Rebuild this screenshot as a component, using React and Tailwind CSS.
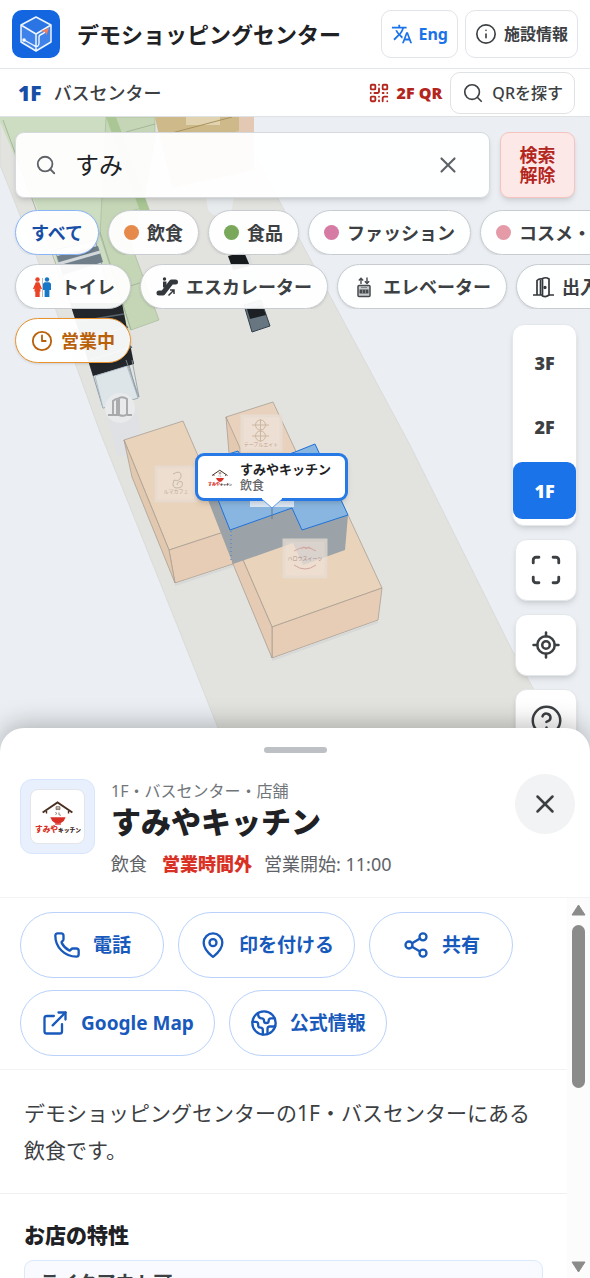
import {
  Info, QrCode, Search, X, Clock3, Scan, LocateFixed, CircleHelp,
  Phone, MapPin, Share2, ExternalLink, Earth,
} from "lucide-react";
import { MdTranslate } from "react-icons/md";

function AppLogo() {
  return (
    <svg viewBox="0 0 48 48" className="size-12 shrink-0" aria-hidden="true">
      <rect width="48" height="48" rx="10" fill="#1466e0" />
      <path d="M24 7 L39 15 V32 L24 41 L9 32 V15Z" fill="#3f83ea" />
      <path d="M24 7 L39 15 L24 24 L9 15Z" fill="#2b74e4" />
      <path d="M24 7 L39 15 V32 L24 41 L9 32 V15Z M9 15 L24 24 L39 15 M24 24 V41" fill="none" stroke="#eef5ff" strokeWidth="1.5" strokeLinejoin="round" />
      <path d="M12 30 L22 35.500 Q27 38 27 33 V27 Q27 25 30 24 Q33 23 33 20.500" fill="none" stroke="#eef5ff" strokeWidth="1.400" />
      <path d="M29 21 L37 18 L34.500 25 L33 22Z" fill="#ef7d5a" />
      <circle cx="12" cy="30" r="1.800" fill="#fff" />
    </svg>
  );
}

function ShopLogo({ className }) {
  return (
    <svg viewBox="0 0 48 34" className={className} aria-hidden="true">
      <path d="M8 13 L23.500 2.500 L39 13" fill="none" stroke="#4a2f20" strokeWidth="2" />
      <path d="M12 11.500V14 M35 11.500V14" stroke="#4a2f20" strokeWidth="1.500" />
      <path d="M22 7h4v3h-4z M22 8.500h4 M21.500 12.500q2 2 0 3 M25 13q-1 3 2 3" fill="none" stroke="#6b5140" strokeWidth=".8" />
      <path d="M16 18 H32 L30 22 Q28 24.500 24 24.500 Q20 24.500 18 22Z" fill="#d93025" />
      <path d="M21 25h6" stroke="#d93025" strokeWidth="1.500" />
      <text x="0" y="33" fontSize="8" fontWeight="900" fontFamily="Noto Sans CJK JP, sans-serif" fill="#d93025">すみや</text>
      <text x="24" y="33" fontSize="6" fontWeight="900" fontFamily="Noto Sans CJK JP, sans-serif" fill="#3b2418">キッチン</text>
    </svg>
  );
}

function RestroomIcon() {
  return (
    <svg viewBox="0 0 22 22" className="size-[22px]" aria-hidden="true">
      <circle cx="6.500" cy="3.500" r="2.200" fill="#ea4325" />
      <path d="M4.800 6.200h3.400l2.800 6.600-1.400.6-1-2 1.100 4H8.700V21H4.300v-5.600H3.200l1.200-4-1 2-1.400-.6z" fill="#ea4325" />
      <path d="M11.500 2v19" stroke="#b5babf" strokeWidth="1" />
      <circle cx="16" cy="3.500" r="2.200" fill="#1676c8" />
      <path d="M13.500 6.200h5l1.500 1.500V14h-1.600v7h-4.800v-7H12V7.700z" fill="#1676c8" />
    </svg>
  );
}

function EscalatorIcon() {
  return (
    <svg viewBox="0 0 22 22" className="size-[22px]" aria-hidden="true">
      <path d="M3 17h4L15.500 6H19.500" fill="none" stroke="#34383c" strokeWidth="5" strokeLinecap="round" strokeLinejoin="round" />
      <circle cx="8.500" cy="3" r="1.700" fill="#34383c" />
      <path d="M7 5.500h3.500v6H7z" fill="#34383c" />
      <path d="M12.500 19.500l5-5 M14 14h4v4" fill="none" stroke="#34383c" strokeWidth="1.500" />
    </svg>
  );
}

function ElevatorIcon() {
  return (
    <svg viewBox="0 0 22 22" className="size-[22px]" aria-hidden="true">
      <path d="M8 8V2.500 M5.800 4.500L8 2.300l2.200 2.200 M14 1.500V7.200 M11.800 5.200L14 7.400l2.200-2.200" fill="none" stroke="#46494d" strokeWidth="1.400" />
      <rect x="5" y="9.500" width="12" height="11" rx="1" fill="#c9ccce" stroke="#46494d" strokeWidth="1.500" />
      <path d="M6.500 13.500h9v4h-9z" fill="#46494d" />
      <path d="M8 11.500h6 M9.500 13.500v4 M12.500 13.500v4" stroke="#83878a" strokeWidth="1" />
    </svg>
  );
}

function DoorIcon() {
  return (
    <svg viewBox="0 0 22 22" className="size-[22px]" fill="none" stroke="#34383c" strokeWidth="1.700" aria-hidden="true">
      <path d="M1 19h4V4.500q2-2 5-1.500 M8.500 4V19 M4.500 19H10 M17 19H22" />
      <path d="M10.500 2.500 Q14 .8 17 3 V19 Q14 21.500 10.500 20Z" />
      <circle cx="13" cy="11.500" r=".8" fill="#34383c" />
    </svg>
  );
}

function FloorMap() {
  return (
    <svg viewBox="0 117 590 1161" preserveAspectRatio="xMidYMin slice" className="absolute inset-0 size-full" role="img" aria-label="1F フロアマップ">
      <rect y="117" width="590" height="1161" fill="#ebeff3" />
      <path d="M0 117H235L300 240L410 445L512 650L555 728L600 820H255L218 728L195 670L100 432L37 258L0 165Z" fill="#e2e3de" stroke="#d5d6d2" strokeWidth=".7" />
      <path d="M0 117H155V131L142 208L131 245L159 320L131 330L85 340L36 205L0 122Z" fill="#cdddc1" />
      <path d="M106 117H155V140L142 208L120 214L159 320L131 330L100 235Z" fill="#c4d6b6" stroke="#a3b599" strokeWidth=".6" />
      <path d="M106 117h10l34 94l-10 0z" fill="#a9c694" />
      <path d="M3 120L38 215L80 330 M126 132L155 124 M100 232L131 330 M130 286L146 281" fill="none" stroke="#9daf93" strokeWidth=".8" />
      <path d="M155 117H254V131L254 170L172 188Z" fill="#e3c8b3" />
      <path d="M155 117H239V131L200 140L160 140Z" fill="#ceb98b" />
      <path d="M186 117h34v8h-34z" fill="#e1d3b0" />
      <path d="M168 134L232 117" stroke="#a8925e" strokeWidth="1" />
      <path d="M206 197h28l-3 16q-14 8-23-3z" fill="#e8ebee" />

      <path d="M55 250L95 240L138 398L103 408Z" fill="#dde3e7" stroke="#7d8a94" strokeWidth=".8" />
      <path d="M57 256L98 246L103 262L63 275Z" fill="#6f7e89" />
      <path d="M58 264L100 252" stroke="#d3d8db" strokeWidth="3" />
      <path d="M70 303L122 303L134 364L93 376Z" fill="#23272b" />
      <path d="M75 322L124 314 M82 339L128 327 M90 360L132 347" stroke="#59646d" strokeWidth="1.500" />
      <path d="M95 376L127 366L138 398L103 408Z" fill="#dde5e9" stroke="#a1afba" strokeWidth=".7" />
      <path d="M126 360L139 397M132 360L139 397" stroke="#8b9aa5" strokeWidth=".8" />

      <path d="M222 222L240 220L270 326L253 332Z" fill="#d9dcdd" />
      <path d="M228 256L244 252L250 266L233 270Z" fill="#171a1d" />
      <path d="M244 305L261 300L270 326L252 332Z" fill="#677681" stroke="#35424c" strokeWidth="1" />
      <path d="M247 309L262 305L266 315L250 319Z" fill="#1c2024" />

      <path d="M106 410Q120 380 136 407L143 445Q136 461 117 455Z" fill="#dfe1e4" />
      <circle cx="120" cy="408" r="15" fill="#e9eaeb" />
      <g fill="none" stroke="#a7a9ab" strokeWidth="1.900">
        <path d="M108 415h5V401q3-3 6-2 M117 400v15 M112 415h7 M127 415h5 M119 398q4-2 8 1v15q-2 3-8 1z" />
      </g>

      <g stroke="#a99f94" strokeWidth=".8" strokeLinejoin="round">
        <path d="M124 440L183 421L230 530L169 550Z" fill="#e9d3bb" />
        <path d="M169 550L230 530L233 564L175 583Z" fill="#e7cdb5" />
        <path d="M124 440L132 477L175 583L169 550Z" fill="#e2c8af" />
        <path d="M226 417L273 402L300 460L245 475Z" fill="#e8d2bd" />
        <path d="M226 417L240 448L240 475L229 453Z" fill="#e3c9b0" />
        <path d="M230 530L348 515L382 588L272 627Z" fill="#e9d3bb" />
        <path d="M272 627L382 588L378 620L272 658Z" fill="#e7cdb6" />
        <path d="M230 530L272 627L272 658L233 564Z" fill="#e5cbb3" />
      </g>
      <path d="M175 585L233 566 M272 660L378 622" stroke="#d7d8d8" strokeWidth="2" />
      <path d="M203 462L230 530L292 508L302 530L348 515L345 550L303 565L293 543L233 564L208 500Z" fill="#9ba3a8" />
      <path d="M203 462L238 451L248 468L295 452L315 444L348 515L302 530L292 508L230 530Z" fill="#89b6e0" stroke="#1f70d8" strokeWidth="1" />
      <path d="M231 531V562" stroke="#3d7ed2" strokeDasharray="1 3" />

      <g fill="#efe2d8" stroke="#e8ddd4" strokeWidth="3">
        <rect x="242" y="416" width="39" height="34" opacity=".85" />
        <rect x="156" y="467" width="40" height="34" opacity=".75" />
        <rect x="284" y="540" width="42" height="37" opacity=".75" />
      </g>
      <rect x="250" y="497" width="44" height="10" fill="#dce9f6" />
      <g fill="none" stroke="#cdb79f" strokeWidth="1">
        <circle cx="260.500" cy="425" r="5" /><circle cx="260.500" cy="436" r="5" />
        <path d="M252 425h17M252 436h17M260.500 419v23" />
        <path d="M173 474q9-5 8 3q-2 5-7 3q-3 8 3 8q7 0 5-6q-4-2-5 3" stroke="#c5b8a9" />
        <path d="M294 551q11-7 22 0M294 565q11 8 22 0 M301 549q3-4 5 0q3-4 5 0" stroke="#d3a7a0" />
      </g>
      <g fontFamily="Noto Sans CJK JP, sans-serif" fontSize="5" textAnchor="middle">
        <text x="261" y="446" fill="#c4a58e">テーブルエイト</text>
        <text x="176" y="493" fill="#bbab9d">ルマカフェ</text>
        <text x="305" y="560" fill="#ad918d">ハロウスイーツ</text>
      </g>
      <path d="M272 505V519" stroke="#65798c" strokeWidth="1" />
    </svg>
  );
}

const CHIP = "flex h-[45px] shrink-0 items-center gap-2 whitespace-nowrap rounded-full border bg-white/95 px-[15px] text-lg leading-6 font-bold shadow-sm";
const SQUARE = "flex size-[62px] items-center justify-center rounded-xl border border-[#e4e7ea] bg-white text-[#3c4043] shadow-md";
const ACTION = "flex h-[66px] min-w-[144px] items-center justify-center gap-3 rounded-full border border-[#b9d2fb] bg-white px-5 text-[19px] leading-7 font-bold text-[#185abc]";

const categories = [
  { name: "飲食", dot: "bg-[#e58a4b]" },
  { name: "食品", dot: "bg-[#79a85a]" },
  { name: "ファッション", dot: "bg-[#d57ba4]" },
  { name: "コスメ・美容", dot: "bg-[#e59aa8]" },
];

const facilities = [
  { name: "トイレ", Icon: RestroomIcon },
  { name: "エスカレーター", Icon: EscalatorIcon },
  { name: "エレベーター", Icon: ElevatorIcon },
  { name: "出入口", Icon: DoorIcon },
];

const actions = [
  { name: "電話", Icon: Phone },
  { name: "印を付ける", Icon: MapPin },
  { name: "共有", Icon: Share2 },
  { name: "Google Map", Icon: ExternalLink },
  { name: "公式情報", Icon: Earth },
];

function Header() {
  return (
    <header className="shrink-0 bg-white">
      <div className="flex h-[69px] items-center border-b border-[#e3e6ec] pl-3 pr-3">
        <AppLogo />
        <h1 className="ml-[17px] min-w-0 flex-1 truncate text-[22px] leading-8 font-bold text-[#202124]">デモショッピングセンター</h1>
        <div className="flex gap-[7px]">
          <button className="flex h-12 items-center gap-[6px] rounded-[10px] border border-[#e1e4e8] px-[9px] text-base font-bold text-[#1a73e8]">
            <MdTranslate className="size-[22px]" aria-hidden="true" />
            Eng
          </button>
          <button className="flex h-12 items-center gap-[7px] rounded-[10px] border border-[#e1e4e8] px-[9px] text-base font-bold text-[#3c4043]">
            <Info className="size-[22px]" strokeWidth={1.8} aria-hidden="true" />
            施設情報
          </button>
        </div>
      </div>
      <div className="flex h-12 items-center border-b border-[#dfe2e5] pl-[18px] pr-[15px]">
        <strong className="text-[21px] leading-7 font-black text-[#174ea6]">1F</strong>
        <span className="ml-3 text-lg leading-7 font-medium text-[#3c4043]">バスセンター</span>
        <button className="ml-auto flex items-center gap-[7px] text-base font-black text-[#b3261e]">
          <QrCode className="size-[22px]" strokeWidth={2} aria-hidden="true" />
          2F QR
        </button>
        <button className="ml-2 flex h-[42px] items-center gap-2 rounded-[10px] border border-[#dfe2e5] px-[11px] text-base font-medium text-[#3c4043]">
          <Search className="size-[22px]" strokeWidth={1.8} aria-hidden="true" />
          QRを探す
        </button>
      </div>
    </header>
  );
}

function SearchPanel() {
  return (
    <div className="relative flex flex-col pt-[15px]">
      <div className="flex gap-[10px] px-[15px]">
        <div className="flex h-[66px] min-w-0 flex-1 items-center rounded-[9px] border border-[#d5d9dd] bg-white/95 pl-[19px] pr-7 shadow-md">
          <Search className="size-[22px] shrink-0 text-[#5f6368]" strokeWidth={2} aria-hidden="true" />
          <input aria-label="店舗検索" defaultValue="すみ" className="ml-[18px] min-w-0 flex-1 bg-transparent text-2xl text-[#202124] outline-none" />
          <button aria-label="入力を消す" className="text-[#5f6368]"><X className="size-[26px]" strokeWidth={2} /></button>
        </div>
        <button className="h-[66px] w-[75px] rounded-[9px] border border-[#f6c4c0] bg-[#fce8e6] text-lg leading-5 font-bold text-[#b3261e] shadow-md">
          検索<br />解除
        </button>
      </div>
      <div className="mt-3 flex gap-[9px] overflow-hidden pl-[15px]">
        <button className={CHIP + " border-[#8ab4f8] bg-[#e8f0fe] text-[#174ea6]"}>すべて</button>
        {categories.map((c) => (
          <button key={c.name} className={CHIP + " border-[#c8ccd1] text-[#3c4043]"}>
            <span className={"size-[15px] rounded-full " + c.dot} />
            {c.name}
          </button>
        ))}
      </div>
      <div className="mt-[9px] flex gap-[9px] overflow-hidden pl-[15px]">
        {facilities.map(({ name, Icon }) => (
          <button key={name} className={CHIP + " border-[#c8ccd1] text-[#3c4043]"}>
            <Icon />
            {name}
          </button>
        ))}
      </div>
      <div className="mt-[9px] flex pl-[15px]">
        <button className={CHIP + " border-[#e8912d] text-[#b9610a]"}>
          <Clock3 className="size-[22px]" strokeWidth={2} aria-hidden="true" />
          営業中
        </button>
      </div>
    </div>
  );
}

function MapControls() {
  return (
    <div className="absolute right-[13px] top-[207px] flex flex-col items-end gap-[13px]">
      <div className="flex w-[65px] flex-col gap-[7px] rounded-xl border border-[#e4e7ea] bg-white pt-[9px] pb-[6px] text-lg font-black text-[#3c4043] shadow-md">
        <button className="h-[57px] rounded-[9px]">3F</button>
        <button className="h-[57px] rounded-[9px]">2F</button>
        <button aria-pressed="true" className="h-[57px] rounded-[9px] bg-[#1a73e8] text-white">1F</button>
      </div>
      <button aria-label="全体表示" className={SQUARE}><Scan className="size-[34px]" strokeWidth={2} /></button>
      <button aria-label="現在地" className={SQUARE}><LocateFixed className="size-[30px]" strokeWidth={2} /></button>
      <button aria-label="ヘルプ" className={SQUARE}><CircleHelp className="size-[33px]" strokeWidth={1.8} /></button>
    </div>
  );
}

function ShopPin() {
  return (
    <div className="absolute left-[195px] top-[336px]">
      <div className="relative flex h-12 w-[153px] items-center gap-2 rounded-[9px] border-[3px] border-[#2779e6] bg-white pl-[10px] shadow-md">
        <ShopLogo className="w-6 shrink-0" />
        <div className="flex flex-col whitespace-nowrap">
          <span className="text-[13px] leading-[17px] font-bold text-[#202124]">すみやキッチン</span>
          <span className="text-xs leading-4 font-medium text-[#5f6368]">飲食</span>
        </div>
        <svg viewBox="0 0 20 11" className="absolute left-[64px] top-[42px] h-[11px] w-5" aria-hidden="true">
          <path d="M0 1L10 10L20 1V0H0Z" fill="#fff" />
          <path d="M1 2L10 10L19 2" fill="none" stroke="#5d9bed" strokeWidth="1" />
        </svg>
      </div>
    </div>
  );
}

function DetailSheet() {
  return (
    <section aria-label="店舗詳細" className="absolute inset-x-0 bottom-0 flex h-[550px] flex-col overflow-hidden rounded-t-3xl bg-white shadow-[0_-4px_24px_rgba(0,0,0,0.25)]">
      <div className="mx-auto mt-[19px] h-[6px] w-[63px] shrink-0 rounded-full bg-[#bdc1c6]" />
      <div className="flex h-[145px] shrink-0 items-start border-b border-[#f1f3f4] pl-5 pr-[15px] pt-[21px]">
        <div className="mt-[5px] flex size-[75px] shrink-0 items-center justify-center rounded-xl border border-[#d8e6fd] bg-[#e8f0fe]">
          <div className="flex size-[55px] items-center justify-center rounded-lg border border-[#e3e5e8] bg-white">
            <ShopLogo className="w-[46px]" />
          </div>
        </div>
        <div className="ml-4 mt-[5px] min-w-0 flex-1">
          <p className="text-base leading-6 text-[#70757a]">1F・バスセンター・店舗</p>
          <h2 className="text-3xl leading-[38px] font-black text-[#202124]">すみやキッチン</h2>
          <p className="mt-[9px] flex text-lg leading-7 text-[#5f6368]">
            <span>飲食</span>
            <strong className="ml-[15px] font-black text-[#d93025]">営業時間外</strong>
            <span className="ml-3">営業開始: 11:00</span>
          </p>
        </div>
        <button aria-label="閉じる" className="flex size-[60px] shrink-0 items-center justify-center rounded-full bg-[#f1f3f4] text-[#3c4043]">
          <X className="size-[30px]" strokeWidth={2} />
        </button>
      </div>
      <div className="flex min-h-0 flex-1">
        <div className="min-w-0 flex-1 overflow-y-auto [scrollbar-width:none]">
          <div className="flex flex-wrap gap-x-[14px] gap-y-3 border-b border-[#f1f3f4] pb-[13px] pl-5 pt-[14px]">
            {actions.map(({ name, Icon }) => (
              <button key={name} className={ACTION}>
                <Icon className="size-[28px]" strokeWidth={2} aria-hidden="true" />
                {name}
              </button>
            ))}
          </div>
          <p className="border-b border-[#eef0f2] px-6 pb-[24px] pt-[25px] text-[21px] leading-[37px] text-[#3c4043]">
            デモショッピングセンターの1F・バスセンターにある飲食です。
          </p>
          <div className="px-6 pb-6 pt-[25px]">
            <h3 className="text-[21px] leading-8 font-black text-[#202124]">お店の特性</h3>
            <div className="mt-[9px] rounded-[9px] border border-[#dce9fd] bg-[#f8faff] px-[15px] py-2 text-[19px] leading-7 font-bold text-[#3c4043]">
              テイクアウト可
            </div>
          </div>
        </div>
        <div className="flex w-[23px] shrink-0 flex-col items-center bg-[#fcfcfc] pb-[5px] pt-[6px]" aria-hidden="true">
          <svg viewBox="0 0 15 12" className="h-3 w-[15px]"><path d="M7.500 1L14 11H1Z" fill="#8b8b8b" stroke="#8b8b8b" strokeLinejoin="round" /></svg>
          <div className="mt-[9px] h-[163px] w-[13px] rounded-full bg-[#8b8b8b]" />
          <svg viewBox="0 0 15 12" className="mt-auto h-3 w-[15px]"><path d="M7.500 11L14 1H1Z" fill="#8b8b8b" stroke="#8b8b8b" strokeLinejoin="round" /></svg>
        </div>
      </div>
    </section>
  );
}

export default function App() {
  return (
    <div className="flex h-screen flex-col overflow-hidden bg-[#ebeff3] font-['Noto_Sans','Noto_Sans_CJK_JP',sans-serif]" lang="ja">
      <Header />
      <main className="relative min-h-0 flex-1 overflow-hidden">
        <FloorMap />
        <SearchPanel />
        <MapControls />
        <ShopPin />
        <DetailSheet />
      </main>
    </div>
  );
}
